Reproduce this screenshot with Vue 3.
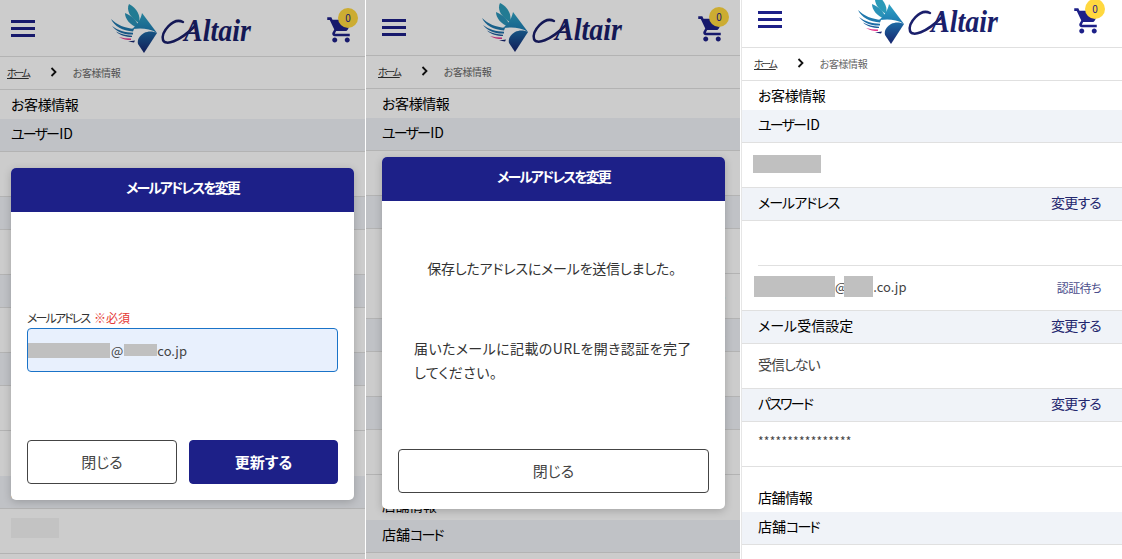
<script setup>
const panels = [
  { key: 'form', pending: false, modal: 'form' },
  { key: 'sent', pending: true, modal: 'sent' },
  { key: 'done', pending: true, modal: null }
]
const cartPath = 'M7 18c-1.1 0-1.99.9-1.99 2S5.9 22 7 22s2-.9 2-2-.9-2-2-2zM1 2v2h2l3.6 7.59-1.35 2.45c-.16.28-.25.61-.25.96 0 1.1.9 2 2 2h12v-2H7.42c-.14 0-.25-.11-.25-.25l.03-.12.9-1.83h7.45c.75 0 1.41-.41 1.75-1.03l3.58-6.47c.08-.14.12-.31.12-.48 0-.55-.45-1-1-1H5.21l-.94-2H1zm16 16c-1.1 0-1.99.9-1.99 2s.89 2 1.99 2 2-.9 2-2-.9-2-2-2z'
</script>

<template>
  <div class="shots">
    <section v-for="p in panels" :key="p.key" class="panel" :class="'panel-' + p.key">
      <div class="page">
        <header class="head">
          <div class="head-in">
            <button class="burger"><span></span><span></span><span></span></button>
            <svg class="logo" width="141" height="49" viewBox="0 0 141 49">
              <defs>
                <linearGradient :id="'g-' + p.key" x1="0" y1="0" x2="0" y2="1">
                  <stop offset="0" stop-color="#2fa3c4" />
                  <stop offset="1" stop-color="#1c78b0" />
                </linearGradient>
                <linearGradient :id="'n-' + p.key" x1="0" y1="0" x2="0" y2="1">
                  <stop offset="0" stop-color="#1d6aa4" />
                  <stop offset="1" stop-color="#16246e" />
                </linearGradient>
              </defs>
              <path d="M18 0C15 6 19 14 28 19C30 12 26 4 18 0Z" fill="#2b9ab8" />
              <path d="M14 9C14 15 19 21 27 24C28 18 21 12 14 9Z" fill="#2b93b8" />
              <path d="M0 15C3 22 12 27 22 27.500L23 25C14 24 6 21 0 15Z" fill="#1f78ad" />
              <path d="M1 22C5 27.500 13 31 22 30.500L22 28.800C14 28.500 7 26.500 1 22Z" fill="#1f6ea8" />
              <path d="M5 27.500C9 31.500 15 33 21 33L21 31.800C15 31.500 10 30 5 27.500Z" fill="#1d5f9e" />
              <path d="M8 33C12 35.500 16 36 20 36L20 34.500C16 34.500 12 34 8 33Z" fill="#e6398f" />
              <path d="M17 37.500L24 36.500L23 38.500Z" fill="#16246e" />
              <path d="M31 9L46 29C38 24 30 24 21 25C26 21 30 15 31 9Z" :fill="'url(#g-' + p.key + ')'" />
              <path d="M46 29L33 49L27 40C26 36 28 32 33 29C37 27 42 27 46 29Z" :fill="'url(#n-' + p.key + ')'" />
              <path class="flourish" d="M72 18C62 13 50 28 52 36C54 42 68 38 84 22" />
              <text class="logo-text" transform="translate(73 37) scale(1 1.15)">Altair</text>
            </svg>
            <div class="cart">
              <svg width="30" height="30" viewBox="0 0 24 24"><path :d="cartPath" fill="#1d2088" /></svg>
              <span class="badge">0</span>
            </div>
          </div>
        </header>

        <nav class="crumbs">
          <a class="home">ホーム</a>
          <svg class="chev" width="7" height="10" viewBox="0 0 7 10"><path d="M1.500 1L5.500 5L1.500 9" /></svg>
          <span class="here">お客様情報</span>
        </nav>

        <h2 class="title">お客様情報</h2>
        <div class="bar first"><span><span class="ls2">ユーザー</span><span class="latin">ID</span></span></div>
        <div class="val"><i class="mask mask-id" v-if="p.key === 'done'"></i></div>

        <div class="bar"><span class="ls1">メールアドレス</span><a>変更する</a></div>
        <div class="val"></div>
        <template v-if="p.pending">
          <div class="val pending">
            <span class="mail">
              <i class="mask mask-user"></i><span class="at">@</span><i class="mask mask-domain"></i>.co.jp
            </span>
            <small>認証待ち</small>
          </div>
        </template>

        <div class="bar"><span>メール受信設定</span><a>変更する</a></div>
        <div class="val"><span class="ls1">受信しない</span></div>

        <div class="bar"><span class="ls2">パスワード</span><a>変更する</a></div>
        <div class="val stars">****************</div>
        <div class="rule"></div>

        <h2 class="title second">店舗情報</h2>
        <div class="bar first"><span>店舗<span class="ls2">コード</span></span></div>
        <div class="val"><i class="mask mask-store" v-if="p.key === 'form'"></i></div>
        <div class="rule"></div>
      </div>

      <div v-if="p.modal" class="overlay">
        <div class="modal">
          <div class="modal-head">メールアドレスを変更</div>
          <div v-if="p.modal === 'form'" class="modal-body form">
            <label class="label"><span>メールアドレス</span> <em>※必須</em></label>
            <div class="input">
              <i class="mask mask-in-user"></i>@<i class="mask mask-in-domain"></i>co.jp
            </div>
            <div class="btns">
              <button class="btn">閉じる</button>
              <button class="btn primary">更新する</button>
            </div>
          </div>
          <div v-else class="modal-body sent">
            <p class="center">保存したアドレスにメールを送信しました。</p>
            <p>届いたメールに記載のURLを開き認証を完了してください。</p>
            <button class="btn wide">閉じる</button>
          </div>
        </div>
      </div>
    </section>
  </div>
</template>

<style>
html, body {
  margin: 0;
  background: #fff;
  overflow: hidden;
}
</style>

<style scoped>
.shots {
  display: grid;
  grid-template-columns: 365px 374px 381px;
  column-gap: 1px;
  width: 1122px;
  height: 559px;
  overflow: hidden;
  font-family: "Noto Sans CJK JP", "Noto Sans", sans-serif;
  font-feature-settings: "palt";
  color: #000;
}
.panel {
  position: relative;
  height: 559px;
  overflow: hidden;
  background: #fff;
}
.page {
  width: 375px;
  --pad-r: 16px;
}
.panel-form .page {
  margin-left: -5px;
}
.panel-sent .page {
  margin-top: -1px;
}
.panel-sent .mail {
  visibility: hidden;
}
.panel-done {
  border-left: 1px solid #e6e6e6;
}
.panel-done .page {
  width: 380px;
  margin-top: -9px;
  --pad-r: 21px;
}
.ls1 {
  letter-spacing: -1px;
}
.ls2 {
  letter-spacing: -1.800px;
}
.latin {
  margin-left: 1px;
}

.head {
  border-bottom: 1px solid #e0e0e0;
}
.head-in {
  position: relative;
  display: flex;
  align-items: center;
  justify-content: space-between;
  width: 375px;
  height: 56px;
  box-sizing: border-box;
  padding: 0 14px 0 16px;
}
.burger {
  display: flex;
  flex-direction: column;
  gap: 4px;
  width: 24px;
  padding: 0;
  border: 0;
  background: none;
}
.burger span {
  height: 3px;
  background: #1d2088;
}
.logo {
  margin-left: 1px;
}
.logo-text {
  font-family: "Liberation Serif", serif;
  font-style: italic;
  font-weight: 700;
  font-size: 28px;
  fill: #1a1f6b;
}
.flourish {
  fill: none;
  stroke: #1a1f6b;
  stroke-width: 2.500;
  stroke-linecap: round;
}
.cart {
  position: relative;
  height: 30px;
  margin-top: 4px;
}
.cart svg {
  display: block;
}
.badge {
  position: absolute;
  top: -7px;
  left: 12px;
  width: 20px;
  height: 20px;
  border-radius: 50%;
  background: #ffd83f;
  color: #1d2088;
  font-size: 10px;
  line-height: 20px;
  text-align: center;
}

.crumbs {
  display: flex;
  align-items: center;
  height: 30px;
  padding: 0 0 2px 12px;
  border-bottom: 1px solid #e0e0e0;
  font-size: 10px;
  color: #666;
}
.home {
  color: #333;
  letter-spacing: -2.300px;
  text-decoration: underline;
}
.here {
  letter-spacing: -0.400px;
}
.chev {
  margin: 0 16px 0 21px;
}
.chev path {
  fill: none;
  stroke: #111;
  stroke-width: 1.800;
}

.title {
  height: 28px;
  margin: 0;
  padding: 1px 0 0 16px;
  font-size: 14px;
  font-weight: 400;
  letter-spacing: -0.400px;
  line-height: 27px;
}
.title.second {
  margin-top: 16px;
}
.bar {
  display: flex;
  align-items: center;
  justify-content: space-between;
  height: 28px;
  padding: 0 var(--pad-r) 4px 16px;
  border-top: 1px solid #e0e0e0;
  border-bottom: 1px solid #e0e0e0;
  background: #f0f3f8;
  font-size: 14px;
  font-weight: 400;
}
.bar.first {
  border-top: 0;
}
.bar a {
  color: #23266e;
  letter-spacing: -0.800px;
}
.val {
  display: flex;
  align-items: center;
  justify-content: space-between;
  height: 40px;
  padding: 0 var(--pad-r) 4px 16px;
  font-size: 14px;
  color: #444;
}
.stars {
  align-items: flex-start;
  height: 34px;
  padding: 10px var(--pad-r) 0 16px;
  font-size: 12px;
  letter-spacing: 0.250px;
}
.pending {
  position: relative;
  height: 45px;
  box-sizing: border-box;
  padding-top: 1px;
}
.pending::before {
  content: "";
  position: absolute;
  top: 0;
  left: 16px;
  right: 0;
  height: 1px;
  background: #e0e0e0;
}
.pending small {
  margin-top: 2px;
  font-size: 12px;
  letter-spacing: -0.600px;
  color: #4c4e8c;
}
.mail {
  display: flex;
  align-items: center;
  margin-left: -4px;
  font-size: 13px;
}
.at {
  letter-spacing: -3px;
}
.rule {
  height: 1px;
  background: #e0e0e0;
}

.mask {
  display: block;
  flex: none;
  background: #c0c0c0;
}
.mask-id {
  width: 68px;
  height: 18px;
  margin: 2px 0 0 -5px;
}
.mask-store {
  width: 48px;
  height: 20px;
  margin: -2px 0 0 0;
  background: #f4f4f4;
}
.mask-user {
  width: 81px;
  height: 21px;
}
.mask-domain {
  width: 29px;
  height: 21px;
}
.mask-in-user {
  width: 82px;
  height: 15px;
  margin-right: 1px;
}
.mask-in-domain {
  width: 33px;
  height: 12px;
  margin-left: 1px;
}

.overlay {
  position: absolute;
  inset: 0;
  display: flex;
  align-items: center;
  box-sizing: border-box;
  padding-top: 109px;
  background: rgba(0, 0, 0, 0.2);
}
.panel-sent .overlay {
  padding-top: 107px;
}
.modal {
  width: 343px;
  margin-left: 11px;
  border-radius: 5px;
  overflow: hidden;
  background: #fff;
  box-shadow: 0 2px 8px rgba(0, 0, 0, 0.2);
}
.panel-sent .modal {
  margin-left: 16px;
}
.modal-head {
  height: 44px;
  background: #1d2088;
  color: #fff;
  font-size: 14px;
  font-weight: 700;
  letter-spacing: -2px;
  line-height: 39px;
  text-align: center;
}
.modal-body {
  box-sizing: border-box;
  padding: 0 16px 16px;
}
.form {
  padding-top: 96px;
}
.label {
  display: block;
  height: 20px;
  font-size: 12px;
  line-height: 19px;
  color: #333;
}
.label span {
  letter-spacing: -1.900px;
}
.label em {
  margin-left: 2px;
  font-style: normal;
  color: #e53935;
}
.input {
  display: flex;
  align-items: center;
  height: 44px;
  box-sizing: border-box;
  border: 1px solid #1a73c8;
  border-radius: 4px;
  background: #e8f0fd;
  font-size: 13px;
  color: #444;
}
.btns {
  display: grid;
  grid-template-columns: 150px 149px;
  column-gap: 12px;
  margin-top: 68px;
}
.btn {
  height: 44px;
  padding: 0 0 2px;
  border: 1px solid #444;
  border-radius: 4px;
  background: #fff;
  color: #444;
  font: inherit;
  font-size: 15px;
}
.btn.primary {
  border-color: #1d2088;
  background: #1d2088;
  color: #fff;
  font-weight: 700;
}
.btn.wide {
  display: block;
  width: 100%;
  margin-top: 65px;
}
.sent p {
  margin: 56px 0 0;
  padding: 0 16px;
  font-size: 14px;
  letter-spacing: 0.400px;
  line-height: 24px;
  color: #333;
}
.sent p.center {
  margin-top: 55px;
  padding: 0 4px 0 0;
  letter-spacing: -0.200px;
  text-align: center;
}
</style>
